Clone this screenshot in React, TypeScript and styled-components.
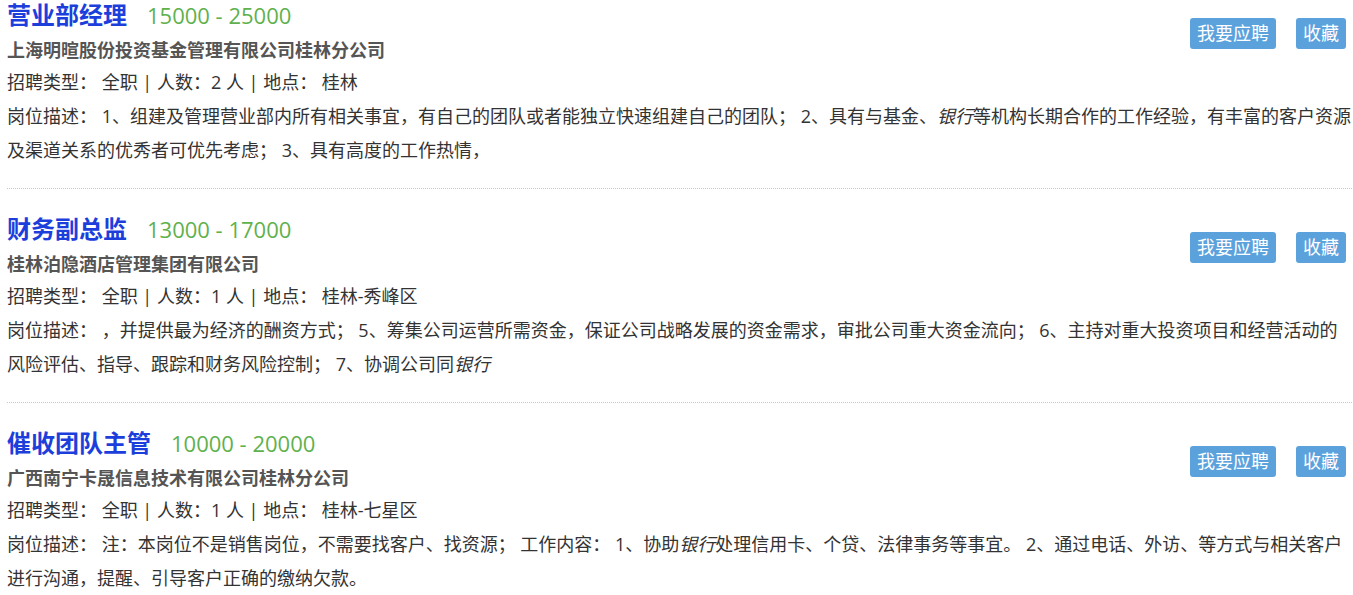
import * as React from "react";
import styled, { createGlobalStyle } from "styled-components";

const jobs = [
  {
    title: "营业部经理",
    salary: "15000 - 25000",
    company: "上海明暄股份投资基金管理有限公司桂林分公司",
    count: 2,
    place: "桂林",
    desc: [
      "1、组建及管理营业部内所有相关事宜，有自己的团队或者能独立快速组建自己的团队； 2、具有与基金、",
      "银行",
      "等机构长期合作的工作经验，有丰富的客户资源及渠道关系的优秀者可优先考虑； 3、具有高度的工作热情，"
    ]
  },
  {
    title: "财务副总监",
    salary: "13000 - 17000",
    company: "桂林泊隐酒店管理集团有限公司",
    count: 1,
    place: "桂林-秀峰区",
    desc: [
      "，并提供最为经济的酬资方式； 5、筹集公司运营所需资金，保证公司战略发展的资金需求，审批公司重大资金流向； 6、主持对重大投资项目和经营活动的风险评估、指导、跟踪和财务风险控制； 7、协调公司同",
      "银行",
      ""
    ]
  },
  {
    title: "催收团队主管",
    salary: "10000 - 20000",
    company: "广西南宁卡晟信息技术有限公司桂林分公司",
    count: 1,
    place: "桂林-七星区",
    desc: [
      "注：本岗位不是销售岗位，不需要找客户、找资源； 工作内容： 1、协助",
      "银行",
      "处理信用卡、个贷、法律事务等事宜。 2、通过电话、外访、等方式与相关客户进行沟通，提醒、引导客户正确的缴纳欠款。"
    ]
  }
];

const GlobalStyle = createGlobalStyle`
  body {
    margin: 0;
    background: #fff;
    font-family: "Open Sans", "Noto Sans CJK SC", sans-serif;
    color: #333;
  }
`;

const List = styled.ul`
  list-style: none;
  margin: 0;
  padding: 0 1px 0 7px;
`;

const Item = styled.li`
  padding: 25px 0 21px;
  border-bottom: 1px dotted #c8c8c8;
  &:first-child {
    padding-top: 0;
  }
`;

const Actions = styled.div`
  float: right;
  display: flex;
  gap: 20px;
  margin: 18px 6px 0 0;
`;

const Button = styled.a`
  display: block;
  height: 31px;
  line-height: 31px;
  padding: 0 7px;
  background: #5ba2dd;
  color: #fff;
  border-radius: 3px;
  font-size: 18px;
  text-decoration: none;
  cursor: pointer;
`;

const TitleRow = styled.div`
  display: flex;
  align-items: baseline;
  gap: 20px;
  height: 30px;
  line-height: 30px;
`;

const Title = styled.a`
  color: #1c3fdc;
  font-size: 24px;
  font-weight: 700;
  text-decoration: none;
`;

const Salary = styled.span`
  color: #5fb14d;
  font-size: 22px;
`;

const Company = styled.div`
  margin-top: 5px;
  font-size: 18px;
  font-weight: 700;
  line-height: 30px;
  color: #555;
`;

const Info = styled.div`
  font-size: 18px;
  line-height: 34px;
`;

const Desc = styled.p`
  margin: 0;
  font-size: 18px;
  line-height: 34px;
  em {
    font-style: italic;
  }
`;

export default function App() {
  return (
    <>
      <GlobalStyle />
      <List>
        {jobs.map(job => (
          <Item key={job.title}>
            <Actions>
              <Button>我要应聘</Button>
              <Button>收藏</Button>
            </Actions>
            <TitleRow>
              <Title>{job.title}</Title>
              <Salary>{job.salary}</Salary>
            </TitleRow>
            <Company>{job.company}</Company>
            <Info>
              招聘类型：&nbsp;全职 | 人数：{job.count} 人 | 地点：&nbsp;{job.place}
            </Info>
            <Desc>
              岗位描述：&nbsp;{job.desc[0]}
              <em>{job.desc[1]}</em>
              {job.desc[2]}
            </Desc>
          </Item>
        ))}
      </List>
    </>
  );
}
